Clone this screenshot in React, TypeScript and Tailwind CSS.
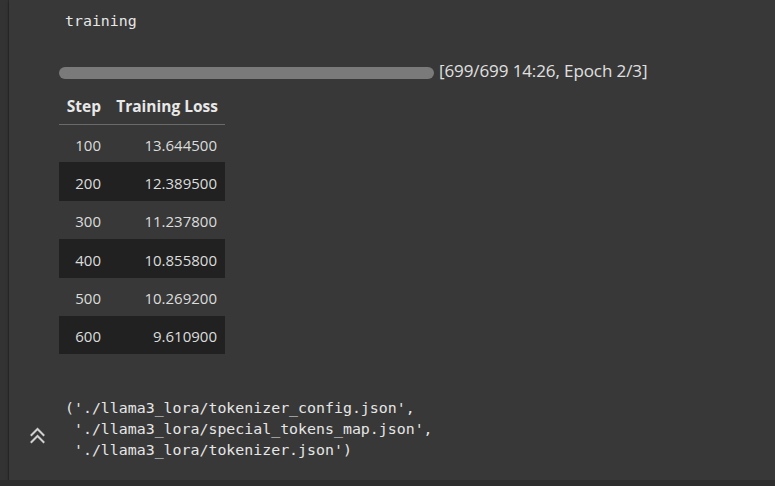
import React from "react";

const rows = [
  ["100", "13.644500"],
  ["200", "12.389500"],
  ["300", "11.237800"],
  ["400", "10.855800"],
  ["500", "10.269200"],
  ["600", "9.610900"],
];

export default function App() {
  return (
    <div className="w-[775px] h-[486px] bg-[#2e2e2e] flex flex-col overflow-hidden">
      <div className="flex flex-1 min-h-0">
        <div className="w-[9px] bg-[#333333] border-r border-[#2c2c2c]" />
        <div className="flex-1 bg-[#383838] flex flex-col shadow-[0_2px_3px_rgba(0,0,0,0.4)]">
          <div className="pl-[56px] pt-[11px] font-['DejaVu_Sans_Mono',monospace] text-[14.9px] leading-[21px] text-[#e6e6e6]">
            training
          </div>
          <div className="pl-[50px] mt-[30px] flex items-center gap-[5px] font-['Open_Sans',sans-serif] text-[17px] text-[#e0e0e0]">
            <div className="w-[375px] h-[12px] rounded-full bg-[#7a7a7a]" />
            <span className="leading-[24px] -mt-[3px] tracking-[-0.1px]">[699/699 14:26, Epoch 2/3]</span>
          </div>
          <table className="ml-[50px] mt-[7px] border-collapse font-['Open_Sans',sans-serif] text-[15px] text-[#dcdcdc] w-[166px]">
            <thead>
              <tr className="border-b border-[#6a6a6a]">
                <th className="h-[34px] pl-[6px] pr-[8px] text-right font-bold text-[#e8e8e8] w-[50px] text-[15.5px]">Step</th>
                <th className="h-[34px] pr-[7px] pl-[6px] text-right font-bold text-[#e8e8e8] text-[15.5px] whitespace-nowrap">Training Loss</th>
              </tr>
            </thead>
            <tbody>
              {rows.map(([s, l], i) => (
                <tr key={s} className={i % 2 === 1 ? "bg-[#212121]" : ""}>
                  <td className="h-[38.4px] pt-[3px] pl-[6px] pr-[8px] text-right">{s}</td>
                  <td className="h-[38.4px] pt-[3px] pr-[8px] text-right">{l}</td>
                </tr>
              ))}
            </tbody>
          </table>
          <div className="flex mt-[44px]">
            <div className="w-[56px] flex items-center justify-center pl-[1px] pt-[10px]">
              <svg width="17" height="18" viewBox="0 0 17 18" fill="none" stroke="#d0d0d0" strokeWidth="2" strokeLinecap="square">
                <path d="M2.5 9 L8.5 3 L14.5 9" />
                <path d="M2.5 16 L8.5 10 L14.5 16" />
              </svg>
            </div>
            <pre className="font-['DejaVu_Sans_Mono',monospace] text-[14.9px] leading-[21px] text-[#e6e6e6]">
{`('./llama3_lora/tokenizer_config.json',
 './llama3_lora/special_tokens_map.json',
 './llama3_lora/tokenizer.json')`}
            </pre>
          </div>
        </div>
      </div>
      <div className="h-[6px] bg-[#2e2e2e]" />
    </div>
  );
}
